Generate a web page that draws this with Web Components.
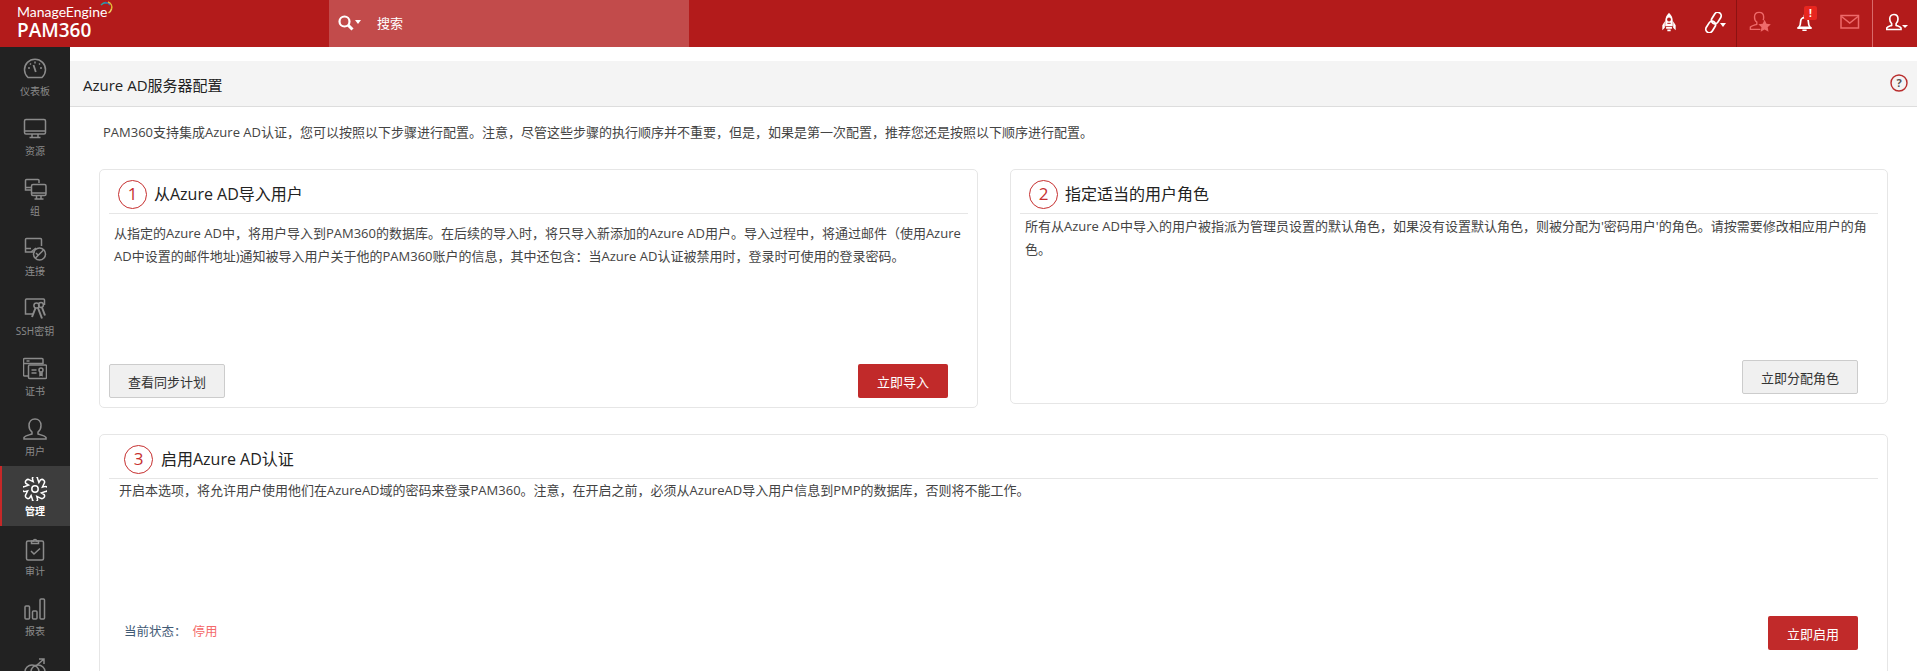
<!DOCTYPE html>
<html lang="zh">
<head>
<meta charset="utf-8">
<title>Azure AD</title>
<style>
html, body { margin: 0; height: 100%; overflow: hidden; background: #fff; }
body { font-family: "Open Sans", "Noto Sans CJK SC", sans-serif; font-size: 13px; color: #333; }
</style>
</head>
<body>
<pam-app>
    <pam-header slot="header"></pam-header>
    <pam-sidebar slot="sidebar">
        <pam-nav-item icon="gauge" label="仪表板"></pam-nav-item>
        <pam-nav-item icon="monitor" label="资源"></pam-nav-item>
        <pam-nav-item icon="group" label="组"></pam-nav-item>
        <pam-nav-item icon="connect" label="连接"></pam-nav-item>
        <pam-nav-item icon="ssh" label="SSH密钥"></pam-nav-item>
        <pam-nav-item icon="cert" label="证书"></pam-nav-item>
        <pam-nav-item icon="user" label="用户"></pam-nav-item>
        <pam-nav-item icon="gear" label="管理" active></pam-nav-item>
        <pam-nav-item icon="audit" label="审计"></pam-nav-item>
        <pam-nav-item icon="bars" label="报表"></pam-nav-item>
        <pam-nav-item icon="trend"></pam-nav-item>
    </pam-sidebar>
    <pam-title-bar heading="Azure AD服务器配置"></pam-title-bar>
    <pam-intro>PAM360支持集成Azure AD认证，您可以按照以下步骤进行配置。注意，尽管这些步骤的执行顺序并不重要，但是，如果是第一次配置，推荐您还是按照以下顺序进行配置。</pam-intro>
    <pam-steps>
        <pam-card num="1" heading="从Azure AD导入用户" style="--card-h:239px;--num-left:18px;--text-left:14px;--text-top:8px;--head-gap:7px">
            从指定的Azure AD中，将用户导入到PAM360的数据库。在后续的导入时，将只导入新添加的Azure AD用户。导入过程中，将通过邮件（使用Azure AD中设置的邮件地址)通知被导入用户关于他的PAM360账户的信息，其中还包含：当Azure AD认证被禁用时，登录时可使用的登录密码。
            <pam-button slot="left">查看同步计划</pam-button>
            <pam-button slot="right" primary style="--btn-w:90px">立即导入</pam-button>
        </pam-card>
        <pam-card num="2" heading="指定适当的用户角色" style="--card-h:235px;--num-left:18px;--text-left:14px;--text-top:1px;--head-gap:7px">
            所有从Azure AD中导入的用户被指派为管理员设置的默认角色，如果没有设置默认角色，则被分配为'密码用户'的角色。请按需要修改相应用户的角色。
            <pam-button slot="right">立即分配角色</pam-button>
        </pam-card>
        <pam-card wide num="3" heading="启用Azure AD认证" style="--card-h:250px;--num-left:24px;--text-left:19px;--text-top:0px;--head-gap:8px;--foot-bottom:33px">
            开启本选项，将允许用户使用他们在AzureAD域的密码来登录PAM360。注意，在开启之前，必须从AzureAD导入用户信息到PMP的数据库，否则将不能工作。
            <pam-status slot="left"></pam-status>
            <pam-button slot="right" primary style="--btn-w:90px">立即启用</pam-button>
        </pam-card>
    </pam-steps>
</pam-app>

<script>
// gear outline, 8 lobes
function gearPath() {
    let d = '';
    for (let i = 0; i < 8; i++) {
        const a = (i * 45 - 14) * Math.PI / 180;
        const b = (i * 45 + 14) * Math.PI / 180;
        const c = (i * 45 + 31) * Math.PI / 180;
        const x1 = 12 + 10.6 * Math.cos(a), y1 = 12 + 10.6 * Math.sin(a);
        const x2 = 12 + 10.6 * Math.cos(b), y2 = 12 + 10.6 * Math.sin(b);
        const x3 = 12 + 7.6 * Math.cos(c), y3 = 12 + 7.6 * Math.sin(c);
        d += (i ? 'L' : 'M') + x1.toFixed(1) + ' ' + y1.toFixed(1) + 'A2.6 2.6 0 0 1 ' + x2.toFixed(1) + ' ' + y2.toFixed(1) + 'L' + x3.toFixed(1) + ' ' + y3.toFixed(1);
    }
    return d + 'Z';
}

const ICONS = {
    gauge: '<path d="M5 20.5A10.5 10.5 0 1 1 19 20.5Z"/><path d="M12 4.5v2M5 11h2M19 11h-2M7 6.5l1 1M17 6.5l-1 1"/><path d="M10.5 8l2.3 7" stroke-width="1.8"/>',
    monitor: '<rect x="1.5" y="2.5" width="21" height="14.5" rx="1.5"/><path d="M1.5 14h21M9 17v3M15 17v3M6.5 20.5h11"/>',
    group: '<path d="M9 13H2.5V3.500a1 1 0 0 1 1-1H15a1 1 0 0 1 1 1V6"/><path d="M2.500 10.500H8"/><rect x="8.500" y="7.500" width="14.500" height="11" rx="1.500"/><path d="M8.500 16h14.500M13.500 18.500v3M18 18.500v3M11.500 22h9"/>',
    connect: '<path d="M12 15H2.500V2.500a1 1 0 0 1 1-1h14a1 1 0 0 1 1 1V9"/><path d="M2.500 11.500H8M8 15l5-4"/><circle cx="16.500" cy="17" r="6"/><path d="M12.500 21l8-8M13 16l2 2"/>',
    ssh: '<path d="M10 17H2.500V3a1 1 0 0 1 1-1h17a1 1 0 0 1 1 1V8"/><circle cx="13.500" cy="8.500" r="2.600"/><circle cx="18" cy="8" r="2.400"/><path d="M12.500 11l-3.500 9M15 11l4 10.500M19 10.500l3 8" stroke-width="2"/>',
    cert: '<path d="M6 19H1.500a1 1 0 0 1-1-1V2.500a1 1 0 0 1 1-1H19a1 1 0 0 1 1 1V7"/><path d="M1 6.500h19M3.500 4h3"/><rect x="5.500" y="8" width="18" height="13.500" rx="1"/><path d="M8.500 13h5M8.500 16h5"/><circle cx="18" cy="13" r="2"/><path d="M17 15v3l1-1 1 1v-3"/>',
    user: '<path d="M12 2c-3.500 0-6 2.700-6 6.500 0 2.800 1 5 3 6.500v2c-3 1-7 1.800-8 3.500v1.500h22V20.500c-1-1.700-5-2.500-8-3.500v-2c2-1.500 3-3.700 3-6.500C18 4.700 15.500 2 12 2z"/>',
    gear: '<path d="' + gearPath() + '"/><circle cx="12" cy="12" r="3.200"/>',
    audit: '<rect x="3.500" y="4" width="17" height="19" rx="1.500"/><path d="M8.500 6.500V4h2a1.500 1.500 0 0 1 3 0h2v2.500zM8 14l3 3 6-5.500"/>',
    bars: '<rect x="2" y="9" width="4.500" height="13" rx="1"/><rect x="9.500" y="14" width="4.500" height="8" rx="1"/><rect x="17" y="2" width="4.500" height="20" rx="1"/>',
    trend: '<circle cx="9" cy="15" r="7"/><circle cx="15" cy="15" r="7"/><path d="M14 8L21 2M16 2h5v5"/>'
};

const HEADER_ICONS = {
    rocket: '<path fill="#fff" d="M12 1c3 3 4.500 6 4.500 10v6h-9v-6C7.500 7 9 4 12 1z"/><path fill="#fff" d="M7 11l-3 5v6l3-3zM17 11l3 5v6l-3-3zM8.500 18h7v2h-7zM10 21h4v2h-4z"/><circle cx="12" cy="9" r="2.300" fill="#b31b1b"/><path fill="#b31b1b" d="M10 13h4v1.200h-4z"/>',
    link: '<g fill="none" stroke="#fff" stroke-width="2"><rect x="-1" y="8" width="14" height="8" rx="4" transform="rotate(-58 12 12)"/><rect x="11" y="8" width="14" height="8" rx="4" transform="rotate(-58 12 12)"/></g>',
    star: '<g fill="none" stroke="#ee6a6a" stroke-width="1.500"><path d="M15.500 10c.4-1 .5-2 .5-3.500 0-3-2-5-5-5s-5 2-5 5c0 2.500.8 4.500 2.500 5.500v2.500c-2 .8-5.500 1.500-7 3V20h11"/></g><path fill="#ee6a6a" d="M17 9.500l2.100 4.400 4.700.6-3.400 3.200.9 4.800-4.300-2.400-4.300 2.400.9-4.800-3.400-3.200 4.700-.6z"/>',
    bell: '<g fill="none" stroke="#fff" stroke-width="2.400"><path d="M4 19c2.500-2.500 2.500-4.500 2.500-8 0-3.500 2-6 5.500-6s5.500 2.500 5.500 6c0 3.500 0 5.500 2.500 8z"/><path d="M2 20h20M9 23h6M12 1v4"/></g>',
    mail: '<g fill="none" stroke="#ee6a6a" stroke-width="1.500"><rect x="3" y="5.500" width="17.500" height="12.500"/><path d="M3.500 6.500l8.250 6.500 8.250-6.500"/></g>',
    person: '<path fill="none" stroke="#fff" stroke-width="2.200" d="M10.500 2c-3.500 0-5.500 2.500-5.500 6 0 2.500.8 4.500 2.500 6v2.500c-2.500 1-5.500 1.800-6.500 3.300V22h19v-2.200c-1-1.500-4-2.300-6.500-3.300V14c1.700-1.500 2.500-3.500 2.500-6 0-3.500-2-6-5.500-6z"/>'
};

class PamApp extends HTMLElement {
    constructor() {
        super();
        this.attachShadow({mode: 'open'}).innerHTML = `
            <style>
                :host { display: grid; grid-template-columns: 70px 1fr; grid-template-rows: 47px 1fr; height: 671px; overflow: hidden; }
                .top { grid-column: 1 / 3; }
                main { padding-top: 14px; overflow: hidden; }
            </style>
            <div class="top"><slot name="header"></slot></div>
            <slot name="sidebar"></slot>
            <main><slot></slot></main>
        `;
    }
}

class PamHeader extends HTMLElement {
    constructor() {
        super();
        const icon = (n, w = 24) => `<svg width="${w}" height="${w}" viewBox="0 0 24 24">${HEADER_ICONS[n]}</svg>`;
        this.attachShadow({mode: 'open'}).innerHTML = `
            <style>
                :host { display: flex; height: 47px; background: #b31b1b; color: #fff; }
                .logo { width: 312px; padding-left: 17px; position: relative; }
                .me { font: 400 14px/16px Lato, sans-serif; padding-top: 4px; }
                .pam { font: 600 19px/24px "Open Sans", sans-serif; margin-top: -2px; }
                .arc { position: absolute; left: 99px; top: 1px; }
                .search { width: 360px; background: #c24b4b; display: flex; align-items: center; box-sizing: border-box; padding: 0 0 2px 9px; }
                .search span { margin-left: 16px; font: 13px "Noto Sans CJK SC", sans-serif; }
                .caret { width: 0; height: 0; border: 3px solid transparent; border-top: 4px solid #fff; margin: 2px 0 0 1px; }
                .right { margin-left: auto; display: flex; height: 47px; }
                .cell { width: 45px; display: flex; align-items: center; justify-content: center; position: relative; padding-bottom: 3px; box-sizing: border-box; }
                .g { display: flex; }
                .g1 { border-right: 1px solid #8c1212; }
                .g2 { border-right: 1px solid #d96a6a; }
                .u { width: 44px; }
                .badge { position: absolute; left: 22px; top: 6px; width: 13px; height: 14px; background: #e8261f; border-radius: 2px; font: 700 10px/14px "Open Sans", sans-serif; text-align: center; }
                .dn { position: absolute; width: 0; height: 0; border: 3px solid transparent; border-top: 4px solid #fff; top: 23px; }
            </style>
            <div class="logo">
                <div class="me">ManageEngine</div>
                <div class="pam">PAM360</div>
                <svg class="arc" width="15" height="16" viewBox="0 0 15 16" fill="none" stroke-width="1.500">
                    <path d="M2 4c2-2 4-3 6-2" stroke="#2f9fa0"/>
                    <path d="M6 2c2-.7 4 .3 5 2" stroke="#3a6fb5"/>
                    <path d="M9 1c3 1 4.500 4 3.500 7" stroke="#e5b935"/>
                    <path d="M12.500 8c-.5 2-1.500 3-3 4" stroke="#f0d060"/>
                </svg>
            </div>
            <div class="search">${icon0()}<i class="caret"></i><span>搜索</span></div>
            <div class="right">
                <div class="g g1">
                    <div class="cell" style="width:44px">${icon('rocket', 20)}</div>
                    <div class="cell" style="width:45px">${icon('link', 21)}<i class="dn" style="left:29px"></i></div>
                </div>
                <div class="g g2">
                    <div class="cell">${icon('star', 22)}</div>
                    <div class="cell">${icon('bell', 17)}<span class="badge">!</span></div>
                    <div class="cell">${icon('mail', 24)}</div>
                </div>
                <div class="cell u">${icon('person', 18)}<i class="dn" style="left:29px;border-top-width:3px;top:25px"></i></div>
            </div>
        `;
        function icon0() {
            return `<svg width="16" height="16" viewBox="0 0 16 16" fill="none" stroke="#fff" stroke-width="2.200"><circle cx="6.500" cy="6.500" r="5"/><path d="M10 10l4.500 4.500" stroke-width="3"/></svg>`;
        }
    }
}

class PamSidebar extends HTMLElement {
    constructor() {
        super();
        this.attachShadow({mode: 'open'}).innerHTML = `
            <style>
                :host { display: block; background: #222; height: 624px; overflow: hidden; }
                ::slotted(:first-child) { margin-top: -1px; }
            </style>
            <slot></slot>
        `;
    }
}

class PamNavItem extends HTMLElement {
    constructor() {
        super();
        this.attachShadow({mode: 'open'});
    }
    connectedCallback() {
        const name = this.getAttribute('icon');
        const label = this.getAttribute('label');
        this.shadowRoot.innerHTML = `
            <style>
                :host { display: block; height: 60px; box-sizing: border-box; padding-top: 11px; text-align: center; color: #8b8b8b; position: relative; }
                :host([active]) { background: #3d3d3d; color: #fff; }
                :host([active])::before { content: ""; position: absolute; left: 0; top: 0; bottom: 0; width: 2px; background: #c62828; }
                svg { display: block; margin: 0 auto; fill: none; stroke: currentColor; stroke-width: 1.500; }
                div { font: 10px/14px "Open Sans", "Noto Sans CJK SC", sans-serif; margin-top: 3px; }
                :host([active]) div { font-weight: 700; }
            </style>
            <svg width="24" height="24" viewBox="0 0 24 24">${ICONS[name]}</svg>
            ${label ? `<div>${label}</div>` : ''}
        `;
    }
}

class PamTitleBar extends HTMLElement {
    constructor() {
        super();
        this.attachShadow({mode: 'open'});
    }
    connectedCallback() {
        this.shadowRoot.innerHTML = `
            <style>
                :host { display: flex; align-items: center; justify-content: space-between; height: 46px; box-sizing: border-box; background: #f4f4f4; border-bottom: 1px solid #ddd; padding: 2px 9px 0 13px; font-size: 15px; color: #222; }
                svg { display: block; margin-top: -4px; }
            </style>
            <span>${this.getAttribute('heading')}</span>
            <svg width="18" height="18" viewBox="0 0 18 18">
                <circle cx="9" cy="9" r="8" fill="none" stroke="#b92d2d" stroke-width="1.400"/>
                <text x="9" y="13" font-size="11" font-weight="700" font-family="Open Sans" text-anchor="middle" fill="#555">?</text>
            </svg>
        `;
    }
}

class PamIntro extends HTMLElement {
    constructor() {
        super();
        this.attachShadow({mode: 'open'}).innerHTML = `
            <style>:host { display: block; padding: 15px 0 0 33px; height: 62px; box-sizing: border-box; line-height: 20px; font-size: 13px; color: #444; }</style>
            <slot></slot>
        `;
    }
}

class PamSteps extends HTMLElement {
    constructor() {
        super();
        this.attachShadow({mode: 'open'}).innerHTML = `
            <style>:host { display: grid; grid-template-columns: 879px 878px; column-gap: 32px; row-gap: 26px; padding-left: 29px; align-items: start; }</style>
            <slot></slot>
        `;
    }
}

class PamCard extends HTMLElement {
    constructor() {
        super();
        this.attachShadow({mode: 'open'});
    }
    connectedCallback() {
        this.shadowRoot.innerHTML = `
            <style>
                :host { display: flex; flex-direction: column; height: var(--card-h); box-sizing: border-box; border: 1px solid #e6e6e6; border-radius: 5px; background: #fff; }
                :host([wide]) { grid-column: 1 / 3; }
                .head { display: flex; align-items: center; height: 44px; box-sizing: border-box; margin: 0 9px; padding: 10px 0 5px calc(var(--num-left) - 9px); border-bottom: 1px solid #e6e6e6; font-size: 16px; color: #222; }
                .title { margin-top: -2px; }
                .num { flex: none; width: 29px; height: 29px; box-sizing: border-box; border: 1px solid #c62f2f; border-radius: 50%; color: #c62f2f; text-align: center; font-size: 17px; line-height: 26px; margin-right: var(--head-gap); }
                .text { flex: 1; padding: var(--text-top) 9px 0 var(--text-left); font-size: 13px; line-height: 23px; color: #444; }
                .foot { display: flex; justify-content: space-between; align-items: center; padding: 0 29px 0 9px; margin-bottom: var(--foot-bottom, 9px); }
                :host([wide]) .foot { padding-left: 24px; }
            </style>
            <div class="head"><span class="num">${this.getAttribute('num')}</span><span class="title">${this.getAttribute('heading')}</span></div>
            <div class="text"><slot></slot></div>
            <div class="foot"><slot name="left"><span></span></slot><slot name="right"></slot></div>
        `;
    }
}

class PamButton extends HTMLElement {
    constructor() {
        super();
        this.attachShadow({mode: 'open'}).innerHTML = `
            <style>
                :host { display: inline-flex; align-items: center; justify-content: center; box-sizing: border-box; height: 34px; min-width: 116px; width: var(--btn-w, auto); padding: 0 18px; border: 1px solid #ccc; border-radius: 2px; background: #f0f0f0; color: #333; font-size: 13px; }
                :host([primary]) { min-width: 90px; padding: 0; border: 0; background: #c12a2a; color: #fff; }
            </style>
            <slot></slot>
        `;
    }
}

class PamStatus extends HTMLElement {
    constructor() {
        super();
        this.attachShadow({mode: 'open'}).innerHTML = `
            <style>
                :host { display: block; font-size: 12.500px; color: #3f5a75; margin-bottom: 5px; }
                b { font-weight: 400; color: #f46a6a; margin-left: 6px; }
            </style>
            当前状态：<b>停用</b>
        `;
    }
}

customElements.define('pam-app', PamApp);
customElements.define('pam-header', PamHeader);
customElements.define('pam-sidebar', PamSidebar);
customElements.define('pam-nav-item', PamNavItem);
customElements.define('pam-title-bar', PamTitleBar);
customElements.define('pam-intro', PamIntro);
customElements.define('pam-steps', PamSteps);
customElements.define('pam-card', PamCard);
customElements.define('pam-button', PamButton);
customElements.define('pam-status', PamStatus);
</script>
</body>
</html>
